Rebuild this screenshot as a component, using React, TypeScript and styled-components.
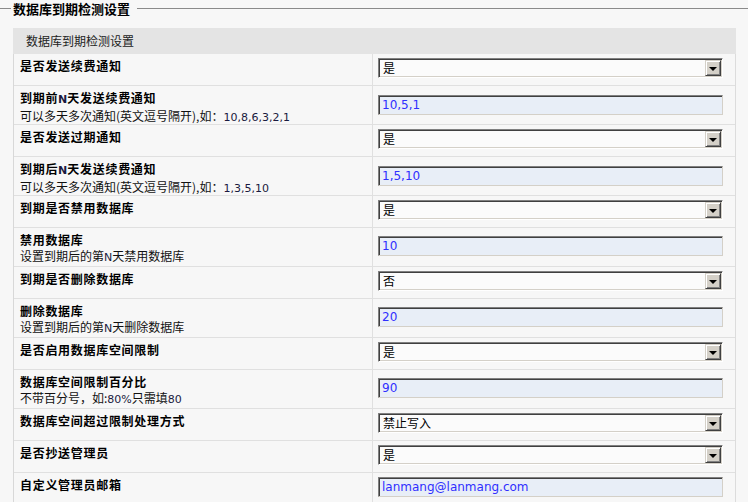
import React from "react";
import styled, { createGlobalStyle } from "styled-components";

const GlobalStyle = createGlobalStyle`
  html, body {
    margin: 0;
    padding: 0;
    background: #f7f7f7;
  }
  body {
    font-family: "Noto Sans CJK SC", "Noto Sans", sans-serif;
    font-size: 12px;
    color: #000;
  }
`;

const Page = styled.div`
  width: 748px;
  height: 502px;
  overflow: hidden;
  background: #f7f7f7;
`;

const LegendBar = styled.div`
  display: flex;
  align-items: center;
  height: 17px;
`;

const Rule = styled.div<{ $grow?: boolean }>`
  border-top: 1px solid #8a8a8a;
  width: ${(p) => (p.$grow ? "auto" : "11px")};
  flex: ${(p) => (p.$grow ? "1" : "0 0 auto")};
`;

const LegendText = styled.span`
  font-weight: 700;
  font-size: 13px;
  line-height: 17px;
  padding: 0 7px 0 2px;
  color: #000;
`;

const Table = styled.div`
  margin: 11px 13px 0 13px;
  width: 721px;
  border-left: 1px solid #d8d8d8;
  border-right: 1px solid #dcdcdc;
`;

const Caption = styled.div`
  height: 26px;
  line-height: 26px;
  background: #e4e4e4;
  padding-left: 13px;
  font-size: 12px;
  color: #222;
  margin-left: -1px;
  margin-right: -1px;
`;

const Row = styled.div<{ $tall?: boolean }>`
  display: grid;
  grid-template-columns: 359px 1fr;
  height: ${(p) => (p.$tall ? "38px" : "31px")};
  border-bottom: 1px solid #e0e0e0;
`;

const LabelCell = styled.div`
  border-right: 1px solid #e0e0e0;
  padding: 4px 0 0 6px;
  display: flex;
  flex-direction: column;
`;

const Label = styled.div`
  font-weight: 700;
  font-size: 12px;
  line-height: 16px;
  letter-spacing: 0.7px;
  color: #000;
`;

const Hint = styled.div`
  font-size: 12px;
  line-height: 16px;
  color: #111;
`;

const Latin = styled.span<{ $bold?: boolean }>`
  font-family: "DejaVu Sans", Verdana, sans-serif;
  font-size: 11px;
  font-weight: ${(p) => (p.$bold ? 700 : 400)};
  letter-spacing: 0;
  color: #1a1a40;
`;

const ValueCell = styled.div<{ $tall?: boolean }>`
  display: flex;
  align-items: center;
  padding: 0 9px ${(p) => (p.$tall ? "2px" : "3px")} 5px;
`;

const SelectBox = styled.div`
  display: flex;
  align-items: stretch;
  box-sizing: border-box;
  width: 345px;
  height: 20px;
  background: #fbfbfb;
  border: 1px solid;
  border-color: #808080 #ffffff #ffffff #808080;
  box-shadow: inset 1px 1px 0 #404040, inset -1px -1px 0 #d4d0c8;
  padding: 1px;
`;

const SelectText = styled.span`
  flex: 1;
  font-size: 12px;
  line-height: 16px;
  padding-left: 3px;
  color: #000;
`;

const DropButton = styled.span`
  flex: 0 0 auto;
  width: 16px;
  box-sizing: border-box;
  background: #d4d0c8;
  border: 1px solid;
  border-color: #d4d0c8 #404040 #404040 #d4d0c8;
  box-shadow: inset 1px 1px 0 #ffffff, inset -1px -1px 0 #808080;
  display: flex;
  align-items: center;
  justify-content: center;
`;

const Arrow = styled.span`
  width: 0;
  height: 0;
  border-left: 4px solid transparent;
  border-right: 4px solid transparent;
  border-top: 4px solid #000;
  margin-top: 1px;
`;

const TextBox = styled.div`
  box-sizing: border-box;
  width: 345px;
  height: 20px;
  background: #e8eef7;
  border: 1px solid;
  border-color: #808080 #d4d0c8 #d4d0c8 #808080;
  box-shadow: inset 1px 1px 0 #404040;
  padding: 1px 0 0 3px;
  font-family: "DejaVu Sans", Verdana, sans-serif;
  font-size: 12px;
  line-height: 16px;
  color: #2f2fff;
  white-space: nowrap;
  overflow: hidden;
`;

type Part = string | { latin: string };

type Item = {
  label: Part[];
  hint?: Part[];
  select?: string;
  text?: string;
};

const items: Item[] = [
  { label: ["是否发送续费通知"], select: "是" },
  {
    label: ["到期前", { latin: "N" }, "天发送续费通知"],
    hint: ["可以多天多次通知(英文逗号隔开),如：", { latin: "10,8,6,3,2,1" }],
    text: "10,5,1",
  },
  { label: ["是否发送过期通知"], select: "是" },
  {
    label: ["到期后", { latin: "N" }, "天发送续费通知"],
    hint: ["可以多天多次通知(英文逗号隔开),如：", { latin: "1,3,5,10" }],
    text: "1,5,10",
  },
  { label: ["到期是否禁用数据库"], select: "是" },
  {
    label: ["禁用数据库"],
    hint: ["设置到期后的第", { latin: "N" }, "天禁用数据库"],
    text: "10",
  },
  { label: ["到期是否删除数据库"], select: "否" },
  {
    label: ["删除数据库"],
    hint: ["设置到期后的第", { latin: "N" }, "天删除数据库"],
    text: "20",
  },
  { label: ["是否启用数据库空间限制"], select: "是" },
  {
    label: ["数据库空间限制百分比"],
    hint: ["不带百分号，如:", { latin: "80%" }, "只需填", { latin: "80" }],
    text: "90",
  },
  { label: ["数据库空间超过限制处理方式"], select: "禁止写入" },
  { label: ["是否抄送管理员"], select: "是" },
  { label: ["自定义管理员邮箱"], text: "lanmang@lanmang.com" },
];

function renderParts(parts: Part[], bold?: boolean) {
  return parts.map((p, i) =>
    typeof p === "string" ? (
      <React.Fragment key={i}>{p}</React.Fragment>
    ) : (
      <Latin key={i} $bold={bold}>
        {p.latin}
      </Latin>
    )
  );
}

function Select({ value }: { value: string }) {
  return (
    <SelectBox>
      <SelectText>{value}</SelectText>
      <DropButton>
        <Arrow />
      </DropButton>
    </SelectBox>
  );
}

export default function App() {
  return (
    <Page>
      <GlobalStyle />
      <LegendBar>
        <Rule />
        <LegendText>数据库到期检测设置</LegendText>
        <Rule $grow />
      </LegendBar>
      <Table>
        <Caption>数据库到期检测设置</Caption>
        {items.map((it, i) => {
          const tall = !!it.hint;
          return (
            <Row key={i} $tall={tall}>
              <LabelCell>
                <Label>{renderParts(it.label, true)}</Label>
                {it.hint && <Hint>{renderParts(it.hint)}</Hint>}
              </LabelCell>
              <ValueCell $tall={tall}>
                {it.select !== undefined ? (
                  <Select value={it.select} />
                ) : (
                  <TextBox>{it.text}</TextBox>
                )}
              </ValueCell>
            </Row>
          );
        })}
      </Table>
    </Page>
  );
}
